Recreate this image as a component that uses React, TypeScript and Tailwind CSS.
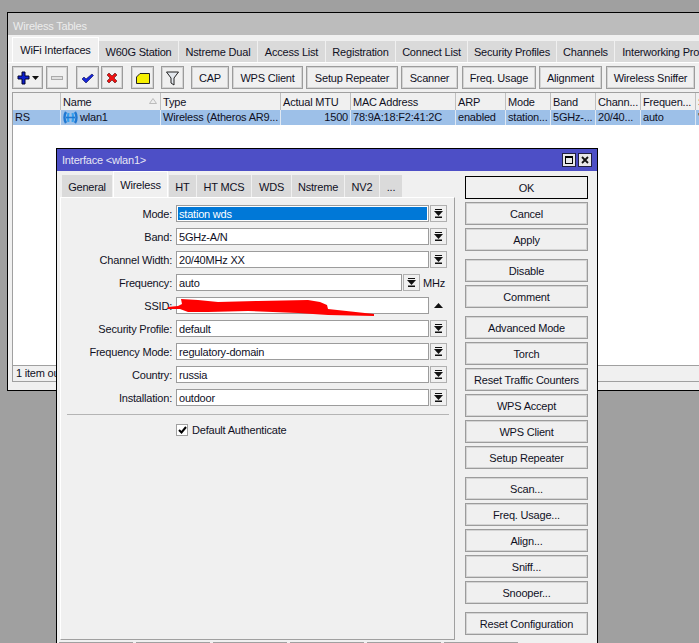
const mainTabs = [
  { label: "W60G Station", width: "w-[79px]" },
  { label: "Nstreme Dual", width: "w-[78px]" },
  { label: "Access List", width: "w-[67px]" },
  { label: "Registration", width: "w-[69px]" },
  { label: "Connect List", width: "w-[71px]" },
  { label: "Security Profiles", width: "w-[88px]" },
  { label: "Channels", width: "w-[57px]" },
  { label: "Interworking Profiles", width: "w-[110px]" },
];

const toolbarText = [
  { label: "CAP", width: "w-[38px]", gap: "ml-[7px]" },
  { label: "WPS Client", width: "w-[71px]", gap: "ml-[3px]" },
  { label: "Setup Repeater", width: "w-[92px]", gap: "ml-[3px]" },
  { label: "Scanner", width: "w-[57px]", gap: "ml-[3px]" },
  { label: "Freq. Usage", width: "w-[74px]", gap: "ml-[4px]" },
  { label: "Alignment", width: "w-[63px]", gap: "ml-[3px]" },
  { label: "Wireless Sniffer", width: "w-[89px]", gap: "ml-[4px]" },
  { label: "", width: "w-[20px]", gap: "ml-[4px]" },
];

const columns = [
  { head: "", cell: "RS", width: "w-[48px]" },
  { head: "Name", cell: "wlan1", width: "w-[100px]" },
  { head: "Type", cell: "Wireless (Atheros AR9...", width: "w-[120px]" },
  { head: "Actual MTU", cell: "1500", width: "w-[70px]", right: true },
  { head: "MAC Address", cell: "78:9A:18:F2:41:2C", width: "w-[105px]" },
  { head: "ARP", cell: "enabled", width: "w-[50px]" },
  { head: "Mode", cell: "station...", width: "w-[45px]" },
  { head: "Band", cell: "5GHz-...", width: "w-[45px]" },
  { head: "Chann...", cell: "20/40...", width: "w-[45px]" },
  { head: "Frequen...", cell: "auto", width: "w-[55px]" },
  { head: "S", cell: "'", width: "w-[20px]" },
];

const dialogTabs = [
  { label: "General", width: "w-[50px]" },
  { label: "Wireless", width: "w-[55px]", active: true },
  { label: "HT", width: "w-[27px]" },
  { label: "HT MCS", width: "w-[54px]" },
  { label: "WDS", width: "w-[39px]" },
  { label: "Nstreme", width: "w-[52px]" },
  { label: "NV2", width: "w-[34px]" },
  { label: "...", width: "w-[22px]" },
];

const fields = [
  { label: "Mode", value: "station wds", selected: true },
  { label: "Band", value: "5GHz-A/N" },
  { label: "Channel Width", value: "20/40MHz XX" },
  { label: "Frequency", value: "auto", unit: "MHz" },
  { label: "SSID", value: "", up: true },
  { label: "Security Profile", value: "default" },
  { label: "Frequency Mode", value: "regulatory-domain" },
  { label: "Country", value: "russia" },
  { label: "Installation", value: "outdoor" },
];

const buttonGroups = [
  ["OK", "Cancel", "Apply"],
  ["Disable", "Comment"],
  ["Advanced Mode", "Torch", "Reset Traffic Counters", "WPS Accept", "WPS Client", "Setup Repeater"],
  ["Scan...", "Freq. Usage...", "Align...", "Sniff...", "Snooper..."],
  ["Reset Configuration"],
];

const ToolButton = ({ className, children }: { className: string; children: React.ReactNode }) => (
  <div className={`flex h-[23px] items-center justify-center border border-[#9c9c9c] bg-[#f0f0f0] pt-px shadow-[inset_0_0_0_1px_#d4d4d4] ${className}`}>
    {children}
  </div>
);

const DropIcon = () => (
  <svg width="9" height="9" viewBox="0 0 9 9">
    <rect x="1" y="0" width="7" height="1" fill="#111" />
    <path d="M0 2h9L4.5 7z" fill="#111" />
    <rect x="1" y="7.5" width="7" height="1.5" fill="#111" />
  </svg>
);

const WlanIcon = () => (
  <svg width="15" height="13" viewBox="0 0 15 13" fill="none">
    <path d="M3 1C1 4 1 9 3 12" stroke="#1f78d2" strokeWidth="2.4" />
    <path d="M12 1C14 4 14 9 12 12" stroke="#1f78d2" strokeWidth="2.4" />
    <path d="M5.5 2C4.5 5 4.5 8 5.5 11" stroke="#37a0ee" strokeWidth="2.2" />
    <path d="M9.5 2C10.5 5 10.5 8 9.5 11" stroke="#37a0ee" strokeWidth="2.2" />
    <path d="M3 6.5h9" stroke="#1f78d2" strokeWidth="1.6" />
  </svg>
);

const FieldRow = ({ field }: { field: (typeof fields)[number] }) => (
  <div className="flex h-[17px] items-center">
    <div className="w-[111px] pt-px text-right whitespace-nowrap">{field.label}:</div>
    <div className={`ml-[4px] flex h-[17px] items-center border border-[#9c9c9c] bg-white p-px ${field.unit ? "w-[226px]" : "w-[253px]"}`}>
      <div className={`flex h-full w-full items-center pt-px pl-[1px] ${field.selected ? "bg-[#0078d7] text-white" : ""}`}>{field.value}</div>
    </div>
    {field.up ? (
      <div className="ml-[1px] flex h-[17px] w-[17px] items-center justify-center">
        <svg width="9" height="5" viewBox="0 0 9 5">
          <path d="M0 5h9L4.5 0z" fill="#111" />
        </svg>
      </div>
    ) : (
      <div className="ml-[1px] flex h-[17px] w-[17px] items-center justify-center border border-[#b0b0b0] bg-[#f0f0f0]">
        <DropIcon />
      </div>
    )}
    {field.unit && <div className="ml-[3px] pt-px">{field.unit}</div>}
  </div>
);

const App = () => {
  return (
    <div className="relative h-[643px] w-[699px] overflow-hidden bg-[#a0a0a0] font-['Liberation_Sans',sans-serif] text-[11px] leading-none tracking-[-0.2px] text-[#10101f]">
      {/* Wireless Tables window */}
      <div className="absolute top-[12px] left-[7px] h-[379px] w-[720px] border border-black bg-[#f0f0f0]">
        <div className="flex h-[22px] items-center bg-[#bcbcbc] pt-[4px] pl-[5px] text-[#ececec]">Wireless Tables</div>

        <div className="flex h-[27px] items-end pl-[4px]">
          <div className="flex h-[25px] w-[87px] items-center justify-center border-x border-t border-white bg-[#f0f0f0] pt-px">WiFi Interfaces</div>
          {mainTabs.map((tab) => (
            <div key={tab.label} className={`mr-px flex h-[21px] items-center justify-center overflow-hidden bg-[#dadada] pt-[2px] whitespace-nowrap ${tab.width}`}>
              {tab.label}
            </div>
          ))}
        </div>

        <div className="flex h-[30px] items-start border-t border-white pt-[3px] pl-[4px]">
          <ToolButton className="w-[31px] gap-[1px]">
            <svg width="24" height="14" viewBox="0 0 24 14">
              <path d="M6 1h3v4h4v3H9v5H6V8H2V5h4z" fill="#0b1fd0" stroke="#05052a" strokeWidth="1" />
              <path d="M16 5h7l-3.5 4z" fill="#111" />
            </svg>
          </ToolButton>
          <ToolButton className="ml-[3px] w-[22px]">
            <svg width="12" height="6" viewBox="0 0 12 6">
              <rect x="0.5" y="1.5" width="11" height="3" fill="#e0e0e0" stroke="#aaa" />
            </svg>
          </ToolButton>
          <ToolButton className="ml-[8px] w-[23px]">
            <svg width="13" height="11" viewBox="0 0 13 11">
              <path d="M1 6l2-2 2 2 6-5 1.5 1.5L5 10z" fill="#1626d8" stroke="#0a0a50" strokeWidth="0.6" />
            </svg>
          </ToolButton>
          <ToolButton className="ml-[2px] w-[22px]">
            <svg width="12" height="12" viewBox="0 0 12 12">
              <path d="M1 3l2-2 3 3 3-3 2 2-3 3 3 3-2 2-3-3-3 3-2-2 3-3z" fill="#ee1111" stroke="#501010" strokeWidth="0.6" />
            </svg>
          </ToolButton>
          <ToolButton className="ml-[8px] w-[23px]">
            <svg width="14" height="11" viewBox="0 0 14 11">
              <path d="M4 .5h9.5v10H.5V4z" fill="#f6f000" stroke="#222" />
            </svg>
          </ToolButton>
          <ToolButton className="ml-[7px] w-[23px]">
            <svg width="13" height="15" viewBox="0 0 13 15">
              <path d="M.5 1h12L8 7v7L5 12V7z" fill="#e4e8ee" stroke="#222" />
            </svg>
          </ToolButton>
          {toolbarText.map((item) => (
            <ToolButton key={item.label + item.width} className={`${item.width} ${item.gap} overflow-hidden whitespace-nowrap`}>
              {item.label}
            </ToolButton>
          ))}
        </div>

        <div className="ml-[4px] h-[273px] border-t border-l border-[#a0a0a0] bg-white">
          <div className="flex h-[17px] bg-[#f0f0f0]">
            {columns.map((col) => (
              <div key={col.head} className={`relative flex shrink-0 items-center overflow-hidden border-r border-[#c0c0c0] pt-px pl-[2px] whitespace-nowrap ${col.width}`}>
                {col.head}
                {col.head === "Name" && (
                  <svg className="absolute top-[5px] right-[3px]" width="8" height="6" viewBox="0 0 8 6">
                    <path d="M.5 5.5h7L4 .5z" fill="#eee" stroke="#bbb" />
                  </svg>
                )}
              </div>
            ))}
          </div>
          <div className="flex h-[15px] bg-[#9dc0e8]">
            {columns.map((col) => (
              <div key={col.head} className={`flex shrink-0 items-center gap-[2px] overflow-hidden border-r border-[#dfe8f2] pl-[2px] whitespace-nowrap ${col.width} ${col.right ? "justify-end pr-[2px]" : ""}`}>
                {col.head === "Name" && <WlanIcon />}
                {col.cell}
              </div>
            ))}
          </div>
        </div>

        <div className="ml-[4px] flex h-[17px] items-center border-t border-b border-l border-[#a0a0a0] pl-[3px]">1 item out of 1</div>
      </div>

      {/* Interface dialog */}
      <div className="absolute top-[148px] left-[56px] h-[500px] w-[542px] border border-black bg-[#f0f0f0]">
        <div className="flex h-[22px] items-center justify-between bg-[#4d4fc6] pr-[5px] pl-[5px] text-[#e6e6f4]">
          <span className="pt-px">Interface &lt;wlan1&gt;</span>
          <div className="flex gap-[2px]">
            <div className="flex h-[14px] w-[14px] items-center justify-center border border-[#202040] bg-[#e8e8e8]">
              <div className="h-[8px] w-[8px] border border-t-2 border-black" />
            </div>
            <div className="flex h-[14px] w-[14px] items-center justify-center border border-[#202040] bg-[#e8e8e8]">
              <svg width="8" height="8" viewBox="0 0 8 8">
                <path d="M1 1l6 6M7 1L1 7" stroke="#111" strokeWidth="1.8" />
              </svg>
            </div>
          </div>
        </div>

        <div className="flex">
          <div className="ml-[2px] w-[396px]">
            <div className="ml-[1px] flex h-[26px] items-end pl-[2px]">
              {dialogTabs.map((tab) => (
                <div
                  key={tab.label}
                  className={`mr-px flex items-center justify-center pt-[2px] ${tab.width} ${
                    tab.active ? "h-[26px] border-x border-t border-white bg-[#f0f0f0]" : "h-[22px] bg-[#dadada]"
                  }`}
                >
                  {tab.label}
                </div>
              ))}
            </div>

            <div className="relative ml-[1px] h-[443px] border border-t-white border-r-[#a0a0a0] border-b-[#a0a0a0] border-l-white pt-[7px]">
              <div className="flex flex-col gap-[6px]">
                {fields.map((field) => (
                  <FieldRow key={field.label} field={field} />
                ))}
              </div>
              <div className="mt-[8px] ml-[6px] h-px w-[382px] bg-[#b4b4b4]" />
              <div className="mt-[9px] ml-[115px] flex items-center gap-[4px]">
                <div className="flex h-[12px] w-[12px] items-center justify-center border border-[#a0a0a0] bg-white">
                  <svg width="9" height="8" viewBox="0 0 9 8">
                    <path d="M1 4l2.5 2.5L8 1" fill="none" stroke="#000" strokeWidth="2" />
                  </svg>
                </div>
                <span>Default Authenticate</span>
              </div>
              {/* red scribble over the SSID value */}
              <svg className="absolute top-[98px] left-[107px]" width="210" height="24" viewBox="0 0 210 24">
                <path
                  d="M0 11L10 10L14 8L13 3L30 4L50 6L90 5L140 4L152 6L159 9L160 13L206 18V20L160 19L130 17L80 15L40 16L20 16L12 13L0 13z"
                  fill="#ff0000"
                />
              </svg>
            </div>

            <div className="mt-[2px] flex gap-[3px]">
              {[0, 1, 2, 3, 4, 5].map((i) => (
                <div key={i} className="h-[8px] w-[74px] shrink-0 border-t-2 border-[#a0a0a0]" />
              ))}
            </div>
          </div>

          <div className="mt-[5px] ml-[10px] flex w-[123px] flex-col gap-[8px]">
            {buttonGroups.map((group) => (
              <div key={group[0]} className="flex flex-col gap-[3px]">
                {group.map((label) => (
                  <div
                    key={label}
                    className={`flex h-[23px] items-center justify-center border bg-[#f0f0f0] pt-px ${
                      label === "OK" ? "border-black" : "border-[#9c9c9c] shadow-[inset_0_0_0_1px_#d4d4d4]"
                    }`}
                  >
                    {label}
                  </div>
                ))}
              </div>
            ))}
          </div>
        </div>
      </div>
    </div>
  );
};

export default App;
